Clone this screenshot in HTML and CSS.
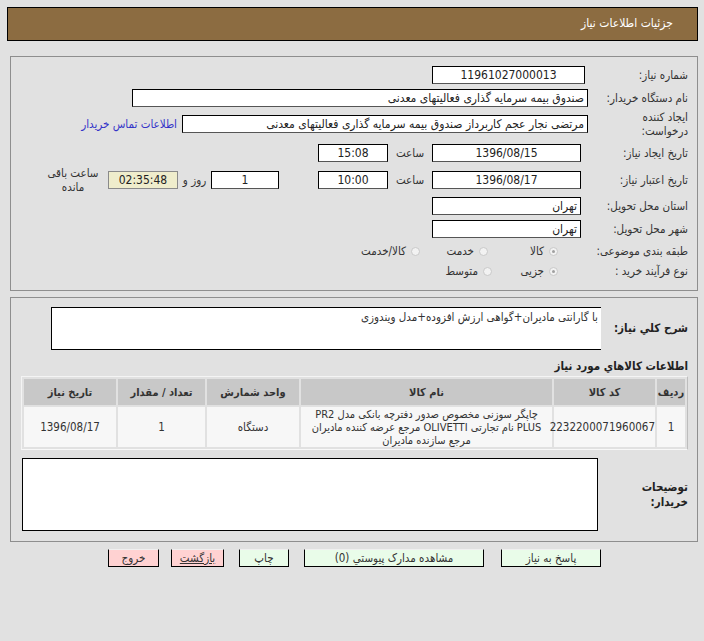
FILE: index.html
```html
<!DOCTYPE html>
<html lang="fa">
<head>
<meta charset="utf-8">
<title>جزئیات اطلاعات نیاز</title>
<link rel="stylesheet" href="styles.css">
</head>
<body>
<div class="page" dir="rtl">
  <div class="titlebar">جزئیات اطلاعات نیاز</div>

  <div class="panel info">
    <div class="row h23">
      <div class="lbl">شماره نیاز:</div>
      <div class="box center w153 mr3">11961027000013</div>
    </div>
    <div class="row h23">
      <div class="lbl">نام دستگاه خریدار:</div>
      <div class="box w456">صندوق بیمه سرمایه گذاری فعالیتهای معدنی</div>
    </div>
    <div class="row h30">
      <div class="lbl">ایجاد کننده<br>درخواست:</div>
      <div class="box w406">مرتضی نجار عجم کاربرداز صندوق بیمه سرمایه گذاری فعالیتهای معدنی</div>
      <a class="link" href="#">اطلاعات تماس خریدار</a>
    </div>
    <div class="row h27">
      <div class="lbl">تاریخ ایجاد نیاز:</div>
      <div class="box center w149 mr7">1396/08/15</div>
      <div class="word w44">ساعت</div>
      <div class="box center w70">15:08</div>
    </div>
    <div class="row h27">
      <div class="lbl">تاریخ اعتبار نیاز:</div>
      <div class="box center w149 mr7">1396/08/17</div>
      <div class="word w44">ساعت</div>
      <div class="box center w70">10:00</div>
      <div class="box center w68 mr39">1</div>
      <div class="word w33">روز و</div>
      <div class="box center w70 remain">02:35:48</div>
      <div class="remain-lbl">ساعت باقی<br>مانده</div>
    </div>
    <div class="row h26">
      <div class="lbl">استان محل تحویل:</div>
      <div class="box w149 mr7">تهران</div>
    </div>
    <div class="row h19">
      <div class="lbl">شهر محل تحویل:</div>
      <div class="box w149 mr7">تهران</div>
    </div>
    <div class="row h26">
      <div class="lbl">طبقه بندی موضوعی:</div>
      <div class="radios">
        <span class="opt o1"><span class="radio checked"></span>کالا</span>
        <span class="opt o2"><span class="radio"></span>خدمت</span>
        <span class="opt"><span class="radio"></span>کالا/خدمت</span>
      </div>
    </div>
    <div class="row h14">
      <div class="lbl">نوع فرآیند خرید :</div>
      <div class="radios">
        <span class="opt o3"><span class="radio checked"></span>جزیی</span>
        <span class="opt"><span class="radio"></span>متوسط</span>
      </div>
    </div>
  </div>

  <div class="panel details">
    <div class="desc-row">
      <div class="blbl">شرح کلي نياز:</div>
      <div class="area desc-area">با گارانتی مادیران+گواهی ارزش افزوده+مدل ویندوزی</div>
    </div>
    <div class="section-title">اطلاعات کالاهاي مورد نياز</div>
    <table class="goods">
      <colgroup>
        <col class="c1"><col class="c2"><col class="c3"><col class="c4"><col class="c5"><col class="c6">
      </colgroup>
      <thead>
        <tr>
          <th>ردیف</th>
          <th>کد کالا</th>
          <th>نام کالا</th>
          <th>واحد شمارش</th>
          <th>تعداد / مقدار</th>
          <th>تاریخ نیاز</th>
        </tr>
      </thead>
      <tbody>
        <tr>
          <td>1</td>
          <td>2232200071960067</td>
          <td class="name">چاپگر سوزنی مخصوص صدور دفترچه بانکی مدل PR2<br>PLUS نام تجارتی OLIVETTI مرجع عرضه کننده مادیران<br>مرجع سازنده مادیران</td>
          <td>دستگاه</td>
          <td>1</td>
          <td>1396/08/17</td>
        </tr>
      </tbody>
    </table>
    <div class="notes-row">
      <div class="blbl notes-lbl">توضیحات<br>خریدار:</div>
      <div class="area notes-area"></div>
    </div>
  </div>

  <div class="buttons">
    <span class="btn green b100">پاسخ به نیاز</span>
    <span class="btn green b180">مشاهده مدارک پیوستي (0)</span>
    <span class="btn green b50">چاپ</span>
    <span class="btn pink b53 underline">بازگشت</span>
    <span class="btn pink b51">خروج</span>
  </div>
</div>
</body>
</html>
```

FILE: styles.css
```css
* { box-sizing: border-box; }

body {
  margin: 0;
  background: #e1e1e1;
  font-family: "DejaVu Sans Condensed", "DejaVu Sans", sans-serif;
  font-size: 11px;
  color: #2a2a2a;
}

.page {
  width: 691px;
  margin-left: 7px;
  padding-top: 7px;
  direction: rtl;
}

.titlebar {
  height: 34px;
  background: #8c6c41;
  border: 1px solid #000;
  color: #fff;
  font-size: 12px;
  line-height: 31px;
  padding-right: 24px;
}

.panel {
  margin-left: 3px;
  border: 1px solid #8e8e8e;
}

.info {
  margin-top: 15px;
  padding: 6px 9px 12px 0;
}

.row {
  display: flex;
  align-items: center;
}
.h23 { height: 23px; }
.h30 { height: 30px; }
.h27 { height: 27px; }
.h26 { height: 26px; }
.h19 { height: 19px; }
.h14 { height: 14px; }

.lbl {
  width: 100px;
  flex: none;
  font-size: 11.5px;
  line-height: 14px;
  color: #333;
}

.box {
  flex: none;
  height: 18px;
  background: #fff;
  border: 1px solid #000;
  border-bottom-color: #555;
  font-size: 12px;
  line-height: 16px;
  padding: 0 3px;
  color: #222;
  white-space: nowrap;
  overflow: hidden;
}
.center { text-align: center; }
.w153 { width: 153px; }
.w456 { width: 456px; }
.w406 { width: 406px; }
.w149 { width: 149px; }
.w70 { width: 70px; }
.w68 { width: 68px; }
.mr3 { margin-right: 3px; }
.mr7 { margin-right: 7px; }
.mr39 { margin-right: 39px; }

.word {
  flex: none;
  text-align: center;
  font-size: 11.5px;
  color: #333;
}
.w44 { width: 44px; }
.w33 { width: 33px; }

.remain {
  background: #efedcc;
  border: 1px solid #8a8a8a;
}
.remain-lbl {
  width: 66px;
  margin-right: 2px;
  text-align: center;
  font-size: 11.5px;
  line-height: 14px;
  color: #333;
}

.link {
  margin-right: 5px;
  color: #3434c8;
  text-decoration: none;
  font-size: 11.5px;
}

.radios {
  display: flex;
  align-items: center;
  margin-right: 30px;
  font-size: 11.5px;
  color: #333;
}
.opt {
  display: flex;
  align-items: center;
  gap: 5px;
}
.o1 { width: 70px; }
.o2 { width: 68px; }
.o3 { width: 66px; }
.radio {
  position: relative;
  width: 9px;
  height: 9px;
  border-radius: 50%;
  border: 1px solid #c9c9c9;
  background: #f2f2f2;
  flex: none;
}
.radio.checked::after {
  content: "";
  position: absolute;
  left: 2px;
  top: 2px;
  width: 3px;
  height: 3px;
  border-radius: 50%;
  background: #a0a0a0;
}

.details {
  margin-top: 6px;
  padding: 9px 9px 10px 0;
}

.desc-row, .notes-row {
  display: flex;
  align-items: center;
}
.blbl {
  width: 87px;
  flex: none;
  font-weight: bold;
  font-size: 11.5px;
  line-height: 15px;
  color: #222;
}
.area {
  background: #fff;
  border: 1px solid #000;
  font-size: 11.5px;
  color: #333;
}
.desc-area {
  width: 550px;
  height: 43px;
  border-right: none;
  padding: 2px 3px;
}

.section-title {
  margin-top: 6px;
  height: 20px;
  line-height: 20px;
  font-weight: bold;
  font-size: 11.5px;
  color: #222;
}

.goods {
  width: 665px;
  table-layout: fixed;
  border-collapse: separate;
  border-spacing: 2px;
  border: 1px solid #f4f4f4;
  border-right-color: #bdbdbd;
  border-bottom-color: #f8f8f8;
}
.c1 { width: 28px; }
.c2 { width: 101px; }
.c3 { width: 251px; }
.c4 { width: 92px; }
.c5 { width: 87px; }
.c6 { width: 92px; }
.goods th {
  height: 26px;
  background: #c8c8c8;
  font-weight: bold;
  font-size: 11px;
  color: #333;
  padding: 0;
}
.goods td {
  height: 40px;
  background: #f7f7f7;
  text-align: center;
  font-size: 11.5px;
  color: #333;
  padding: 0;
}
.goods td.name {
  font-size: 11px;
  line-height: 13px;
}

.notes-row {
  margin-top: 8px;
}
.notes-lbl {
  width: 90px;
}
.notes-area {
  width: 576px;
  height: 73px;
}

.buttons {
  display: flex;
  margin-top: 7px;
  padding-right: 97px;
  gap: 15px;
}
.btn {
  height: 18px;
  border: 1px solid #000;
  border-top-color: #f0f0f0;
  font-size: 11.5px;
  line-height: 16px;
  text-align: center;
  color: #333;
}
.green { background: #e9fce9; }
.pink { background: #ffd2d2; }
.b100 { width: 100px; }
.b180 { width: 180px; margin-right: 2px; }
.b50 { width: 50px; }
.b53 { width: 53px; }
.b51 { width: 51px; margin-right: -3px; }
.underline { text-decoration: underline; }
```
